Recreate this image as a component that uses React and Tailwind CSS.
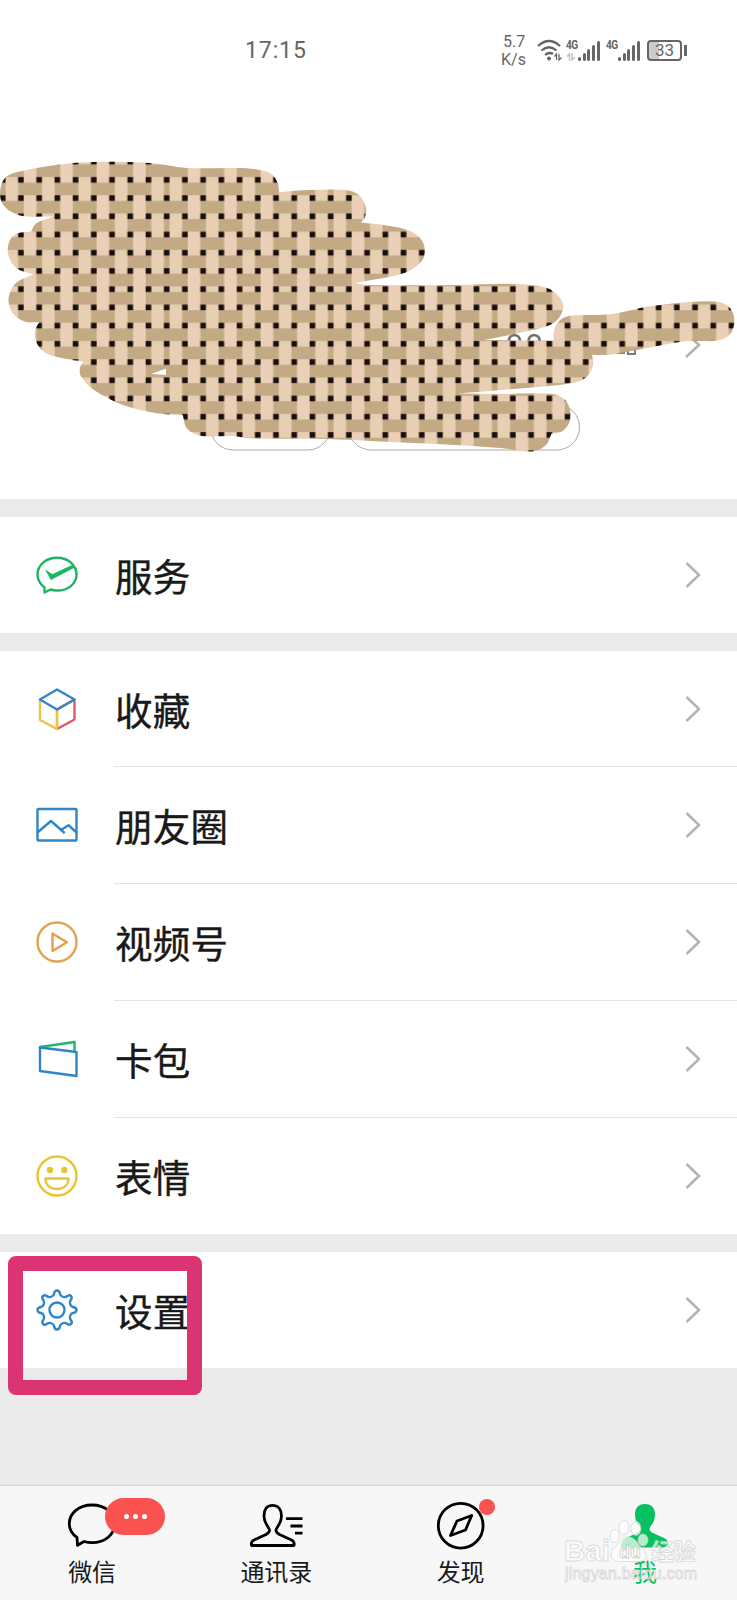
import { useId } from 'react';

const CELL = 18.22;
const TILE = CELL * 9;

// outline of the scribble, every list is one smooth run between two sharp corners
const SCRIBBLE = [
  [[53, 216.7], [20, 215.5], [5, 207], [0, 195], [5, 178], [22, 171], [60, 164.5], [93, 162], [150, 163], [187, 168], [237, 168], [257, 169.5], [272, 174.5], [278, 184], [279.3, 192]],
  [[279.3, 192], [310, 190], [345, 190], [359, 195], [365.7, 207], [365, 217], [361, 222.5]],
  [[361, 222.5], [387, 225.5], [410, 231], [421.5, 240], [425, 252], [420, 263], [403, 273.5], [355, 283]],
  [[355, 283], [367, 285], [457, 285], [514, 284], [547, 288], [560, 298], [563, 309], [555, 322], [537, 329], [484, 340]],
  [[484, 340], [553.5, 340.5]],
  [[553.5, 340.5], [554, 331], [559, 321], [570, 315.7], [610, 314.3], [647, 306.7], [690, 302], [719, 302], [730, 308], [734.5, 321], [730, 334], [718, 340.5], [683, 341.5], [637, 350], [610, 354.7], [592, 354.7]],
  [[592, 354.7], [593, 365], [587, 376.5], [573.5, 383], [514, 389], [457, 393.5]],
  [[457, 393.5], [500, 394], [553, 394], [565, 400], [570.3, 411.5], [569, 423], [562, 431.5], [551.3, 434]],
  [[551.3, 434], [546, 445], [532, 451.5], [500, 448], [437, 444], [380, 441.5], [327, 439], [250, 438.3], [233, 436], [200, 435.7], [187, 428.5], [182.7, 415]],
  [[182.7, 415], [157, 413.3], [123, 405], [94, 390], [81, 376.5], [80, 368], [83.3, 361.7]],
  [[83.3, 361.7], [63, 358.3], [44, 352], [35.5, 340], [35.5, 329], [39.3, 322]],
  [[39.3, 322], [26, 322], [13, 313.5], [8.5, 299], [15, 284], [33.3, 274.3]],
  [[33.3, 274.3], [17, 268.5], [8.3, 255], [9.5, 241], [17, 233.5], [31, 231.7]],
  [[31, 231.7], [36, 223.5], [53, 216.7]],
];

const smooth = (pts) => {
  let d = '';
  for (let i = 0; i < pts.length - 1; i++) {
    const a = pts[i - 1] || pts[i];
    const b = pts[i];
    const c = pts[i + 1];
    const e = pts[i + 2] || c;
    // tangents are scaled to the length of this piece to keep it from overshooting
    const len = Math.hypot(c[0] - b[0], c[1] - b[1]);
    const t1 = Math.hypot(c[0] - a[0], c[1] - a[1]) || 1;
    const t2 = Math.hypot(e[0] - b[0], e[1] - b[1]) || 1;
    const k = len / 3;
    d += `C${b[0] + ((c[0] - a[0]) / t1) * k} ${b[1] + ((c[1] - a[1]) / t1) * k} ${c[0] - ((e[0] - b[0]) / t2) * k} ${c[1] - ((e[1] - b[1]) / t2) * k} ${c[0]} ${c[1]}`;
  }
  return d;
};

const outline = `M53 216.7${SCRIBBLE.map(smooth).join('')}Z M151 374L166 368.5V375Z`;

function Scribble() {
  const id = useId();
  const cells = [];
  for (let r = 0; r < 9; r++) {
    for (let c = 0; c < 9; c++) {
      cells.push(
        <g key={`${r}-${c}`} transform={`translate(${c * CELL} ${r * CELL})`}>
          <rect x="2.8" y="-0.2" width="12.7" height={CELL + 0.4} fill={c % 2 ? '#ebcfb6' : '#e8cfb1'} />
          {(r + c) % 2 === 0 && <rect x="0" y="2.8" width={CELL} height="12.6" fill="#c4a985" />}
        </g>
      );
    }
  }
  const knots = [];
  for (let r = 0; r < 10; r++) {
    for (let c = 0; c < 10; c++) {
      knots.push(<rect key={`${r}-${c}`} x={c * CELL - 2.8} y={r * CELL - 2.8} width="5.6" height="5.6" fill="#180f0d" />);
    }
  }
  return (
    <svg className="absolute left-0 top-0" width="737" height="499" viewBox="0 0 737 499">
      <defs>
        <pattern id={id} x="2.7" y="125.2" width={TILE} height={TILE} patternUnits="userSpaceOnUse">
          <rect width={TILE} height={TILE} fill="#c4a985" />
          {cells}
          {knots}
        </pattern>
      </defs>
      <path d={outline} fill={`url(#${id})`} fillRule="evenodd" />
    </svg>
  );
}

function Chevron() {
  return (
    <svg className="mr-9 h-7 w-4 shrink-0" viewBox="0 0 16 28" fill="none" stroke="#b2b2b2" strokeWidth="2.5">
      <path d="M1.5 2L14 14L1.5 26" />
    </svg>
  );
}

const icons = {
  service: (
    <g stroke="#1bb563" strokeWidth="2.4">
      <path d="M8.5 33.5C4 30 1.5 25.5 1.5 20.5C1.5 11 10 3.8 21 3.8S40.5 11 40.5 20.5S32 36.5 21 36.5C18.5 36.5 16.5 36.2 14.5 35.5L8.5 38.5Z" />
      <path d="M10 16.500L15 25.500L39 13L37 11L16.500 20.500Z" fill="#1bb563" strokeWidth="0.8" />
    </g>
  ),
  favorite: (
    <g strokeWidth="2.4">
      <path d="M4 11.5V32L21 41V21.5" stroke="#efc143" />
      <path d="M21 41L38.5 31.5V11.5L21 21.5" stroke="#dd5b63" />
      <path d="M21 41V21.5" stroke="#efc143" />
      <path d="M4 11.5L21 1.5L38.5 11.5L21 21.5Z" stroke="#3584c8" />
    </g>
  ),
  moments: (
    <g stroke="#2f86c6" strokeWidth="2.4">
      <rect x="1.5" y="5" width="39" height="31.5" rx="1" />
      <path d="M2 28L15 17L28 28.5M25 26L32.5 21.2L40 28" />
    </g>
  ),
  channels: (
    <g stroke="#e3a251" strokeWidth="2.4">
      <circle cx="21" cy="21" r="19.5" />
      <path d="M16.5 12.5V30L31 21.2Z" />
    </g>
  ),
  cards: (
    <g strokeWidth="2.4">
      <path d="M4 9L38.5 4V14" stroke="#22b573" />
      <path d="M4 9.5L40.5 14V38L4 33Z" stroke="#2f86c6" />
    </g>
  ),
  stickers: (
    <g stroke="#e8c435" strokeWidth="2.4">
      <circle cx="21" cy="21" r="19.5" />
      <path d="M9.5 23.5H32.5C32.5 30 28 34 21 34S9.5 30 9.5 23.5Z" />
      <circle cx="14" cy="15" r="3.2" fill="#e8c435" stroke="none" />
      <circle cx="28.3" cy="15" r="3.2" fill="#e8c435" stroke="none" />
    </g>
  ),
  settings: (
    <g stroke="#2f86c6" strokeWidth="2.4">
      <circle cx="21" cy="21" r="7.5" />
      {/* eight teeth */}
      <path d="M18 5C18.4 2.3 19.2 1.5 21 1.5S23.6 2.3 24 5C24.4 7.5 28.5 9 30.5 7.5C32.7 5.8 33.8 5.6 35 7S36.2 9.3 34.5 11.5C33 13.5 34.5 17.6 37 18C39.7 18.4 40.5 19.2 40.5 21S39.7 23.6 37 24C34.500 24.4 33 28.5 34.5 30.5C36.2 32.7 36.4 33.8 35 35S32.7 36.2 30.5 34.5C28.500 33 24.400 34.500 24 37C23.600 39.700 22.800 40.500 21 40.500S18.400 39.700 18 37C17.600 34.500 13.500 33 11.500 34.500C9.300 36.200 8.200 36.400 7 35S5.800 32.700 7.500 30.500C9 28.500 7.500 24.400 5 24C2.300 23.600 1.500 22.800 1.500 21S2.300 18.400 5 18C7.500 17.600 9 13.500 7.500 11.500C5.800 9.300 5.600 8.200 7 7S9.300 5.800 11.500 7.500C13.500 9 17.600 7.500 18 5Z" />
    </g>
  ),
};

function MenuRow({ icon, label, height = 'h-[117px]', last }) {
  return (
    <div className={`flex items-center bg-white ${height}`}>
      <svg className="mb-px ml-9 h-[42px] w-[42px] shrink-0" viewBox="0 0 42 42" fill="none" strokeLinejoin="round" strokeLinecap="round">
        {icons[icon]}
      </svg>
      <div className={`ml-9 flex h-full flex-1 items-center justify-between border-b ${last ? 'border-transparent' : 'border-[#e4e4e4]'}`}>
        <span className="pl-px text-[37.5px] leading-none tracking-[0.2px] text-[#191919] [-webkit-text-stroke:0.4px_#191919]">{label}</span>
        <Chevron />
      </div>
    </div>
  );
}

function StatusBar() {
  const bars = ['h-1', 'h-[8px]', 'h-[12px]', 'h-[16px]', 'h-[20px]'];
  return (
    <div className="flex h-[100px] items-center text-[#666]">
      <span className="ml-[245px] w-[256px] pt-[3px] text-[23px] tracking-[0.9px] font-['Roboto','Noto_Sans',sans-serif]">17:15</span>
      <div className="w-[36px] pt-px text-[16px] leading-[18px] font-['Roboto','Noto_Sans',sans-serif]">
        <div className="pl-0.5">5.7</div>
        <div>K/s</div>
      </div>
      <svg className="mr-0.5 h-[24px] w-[27px]" viewBox="0 0 27 24" fill="none" stroke="#666" strokeWidth="2.3">
        <path d="M1 8Q12 -2 23 8M4.5 12.5Q12 6 19.5 12.5M8 17Q12 13.5 16 16" />
        <circle cx="12" cy="20.5" r="2" fill="#666" stroke="none" />
        <path d="M19.5 22V16L17.5 18.500M22 16V22L24.5 19.5" strokeWidth="1.3" />
      </svg>
      {[0, 1].map((n) => (
        <div key={n} className="flex h-[22px] w-[40px] items-end">
          <div className="flex h-full w-[12px] flex-col justify-between text-[12px] font-bold leading-[12px] tracking-[-0.8px] font-['Roboto',sans-serif]">
            <span className="origin-top-left scale-x-85">4G</span>
            {n === 0 && (
              <svg className="h-[8px] w-[10px]" viewBox="0 0 10 8" fill="none" stroke="#bbb" strokeWidth="1.3">
                <path d="M3.5 8V1L1 3.5M6 0V7L9 4" />
              </svg>
            )}
          </div>
          <div className="flex items-end gap-[1.7px]">
            {bars.map((h) => (
              <i key={h} className={`w-[3px] rounded-sm bg-[#666] ${h}`} />
            ))}
          </div>
        </div>
      ))}
      <div className="ml-px flex h-[21px] w-[35px] items-center justify-center rounded-[4px] border-2 border-[#666] bg-linear-to-r from-[#ccc] from-33% to-white to-33% text-[17px] leading-none font-['Roboto',sans-serif]">
        33
      </div>
      <i className="ml-0.5 h-[11px] w-[3px] bg-[#666]" />
    </div>
  );
}

function Profile() {
  return (
    <div className="relative h-[399px]">
      <span className="absolute left-[506px] top-[229px] text-[30px] leading-[30px] tracking-[3px] text-[#6f6f6f] font-['Liberation_Sans',sans-serif]">00</span>
      <svg className="absolute left-0 -top-[100px]" width="737" height="499" viewBox="0 0 737 499" fill="none">
        <path d="M612 353H622V349M624 349V354M628 346H635V354H628Z" stroke="#7b7b7b" strokeWidth="2" />
        <path d="M686 333L699 345L686 357" stroke="#b2b2b2" strokeWidth="2.5" />
        <rect x="210.5" y="404.5" width="120" height="45.5" rx="22.7" stroke="#aaa" />
        <rect x="348.5" y="404.5" width="231" height="45.5" rx="22.7" stroke="#aaa" />
      </svg>
      <div className="absolute left-0 -top-[100px]">
        <Scribble />
      </div>
    </div>
  );
}

function Tab({ label, active, children }) {
  return (
    <div className={`flex flex-1 flex-col items-center pt-3 text-[24px] ${active ? 'text-[#07c160]' : 'text-[#191919]'}`}>
      <div className="relative">
        <svg className="h-[56px] w-[64px]" viewBox="0 0 64 56" fill="none" stroke="black" strokeWidth="2.8" strokeLinejoin="round">
          {children[0]}
        </svg>
        {children[1]}
      </div>
      <span className="mt-[3px] leading-[28px]">{label}</span>
    </div>
  );
}

function TabBar() {
  return (
    <div className="flex h-[115px] border-t border-[#d6d6d6] bg-[#f7f7f7]">
      <Tab label="微信">
        <path d="M17 39.5C12 36 9.3 31 9.3 25.7C9.3 15 19 7 32 7S54.7 15 54.7 25.7S45 44.700 32 44.700C29 44.700 26.500 44.200 24 43.500L17.500 47.300Z" />
        <div className="absolute left-[45px] top-0 flex h-[37px] w-[60px] items-center justify-center gap-1 rounded-full bg-[#fa5151]">
          <i className="h-[5px] w-[5px] rounded-full bg-white" />
          <i className="h-[5px] w-[5px] rounded-full bg-white" />
          <i className="h-[5px] w-[5px] rounded-full bg-white" />
        </div>
      </Tab>
      <Tab label="通讯录">
        <path d="M28.500 7.300C22.500 7.300 20 12 20 18C20 23 22 26 24 29C26.500 32.500 26 34 22 36.500L10 42C7.500 43.500 7 45.500 7.500 47.500H50C50.500 45.500 50 43.500 47.500 42L35.500 36.500C31.500 34 31 32.500 33.500 29C35.500 26 37.500 23 37.500 18C37.500 12 34.500 7.300 28.500 7.300ZM42 20.700H58.500M46.500 28H58.500M51 35.200H58.500" />
        {null}
      </Tab>
      <Tab label="发现">
        <>
          <circle cx="31.7" cy="27.7" r="22.4" />
          <path d="M42.700 17.500L36.500 32L21.500 37.500L28 23Z" />
        </>
        <i className="absolute left-[50px] top-px h-[16px] w-[16px] rounded-full bg-[#fa5151]" />
      </Tab>
      <Tab label="我" active>
        <path d="M32 6C25 6 22 10.500 22 16.500C22 21.500 24 25.500 26.500 28.500C28.500 31.500 27 33.500 24 35L12 40.500C9 42.500 8 45 8 49.500H56C56 45 55 42.500 52 40.500L40 35C37 33.500 35.500 31.500 37.500 28.500C40 25.500 42 21.500 42 16.500C42 10.500 39 6 32 6Z" fill="#07c160" stroke="none" />
        {null}
      </Tab>
    </div>
  );
}

function Watermark() {
  return (
    <svg className="absolute left-[560px] top-[1515px]" width="140" height="72" viewBox="0 0 140 72" fill="#ffffff" fillOpacity="0.7" stroke="#cfcfcf" strokeOpacity="0.75" strokeWidth="0.9" fontFamily="'Liberation Sans', 'Noto Sans CJK SC', sans-serif">
      <text x="4" y="45.5" fontSize="30" fontWeight="bold" textLength="46" lengthAdjust="spacingAndGlyphs">Bai</text>
      <ellipse cx="54.5" cy="21" rx="4.5" ry="6.5" />
      <ellipse cx="64" cy="12.500" rx="5" ry="7" />
      <ellipse cx="76" cy="13.500" rx="5" ry="7" />
      <ellipse cx="83" cy="25" rx="5" ry="6" />
      <path d="M68 22C61 22 59 29 54 33C47 41 54 48 63 46.500H74C85 48 90 40 82 33C77 29 76 22 68 22Z" />
      <text x="59" y="43" fontSize="18" fontWeight="bold" stroke="#bdbdbd">du</text>
      <text x="91" y="44.500" fontSize="23" fontWeight="bold" textLength="45">经验</text>
      <text x="5" y="64" fontSize="16" textLength="132">jingyan.baidu.com</text>
    </svg>
  );
}

export default function App() {
  return (
    <div className="relative flex h-[1600px] w-[737px] flex-col overflow-hidden bg-[#ebebeb] font-['Noto_Sans_CJK_SC',sans-serif]">
      <div className="bg-white">
        <StatusBar />
        <Profile />
      </div>
      <div className="mt-[18px]">
        <MenuRow icon="service" label="服务" height="h-[116px]" last />
      </div>
      <div className="mt-[18px]">
        <MenuRow icon="favorite" label="收藏" height="h-[116px]" />
        <MenuRow icon="moments" label="朋友圈" />
        <MenuRow icon="channels" label="视频号" />
        <MenuRow icon="cards" label="卡包" />
        <MenuRow icon="stickers" label="表情" height="h-[116px]" last />
      </div>
      <div className="mt-[18px]">
        <MenuRow icon="settings" label="设置" height="h-[116px]" last />
      </div>
      <div className="mt-auto">
        <TabBar />
      </div>
      <div className="absolute left-[8px] top-[1256px] h-[139px] w-[194px] rounded-lg border-x-[15.5px] border-y-[15.5px] border-[#db3473]" />
      <Watermark />
    </div>
  );
}
